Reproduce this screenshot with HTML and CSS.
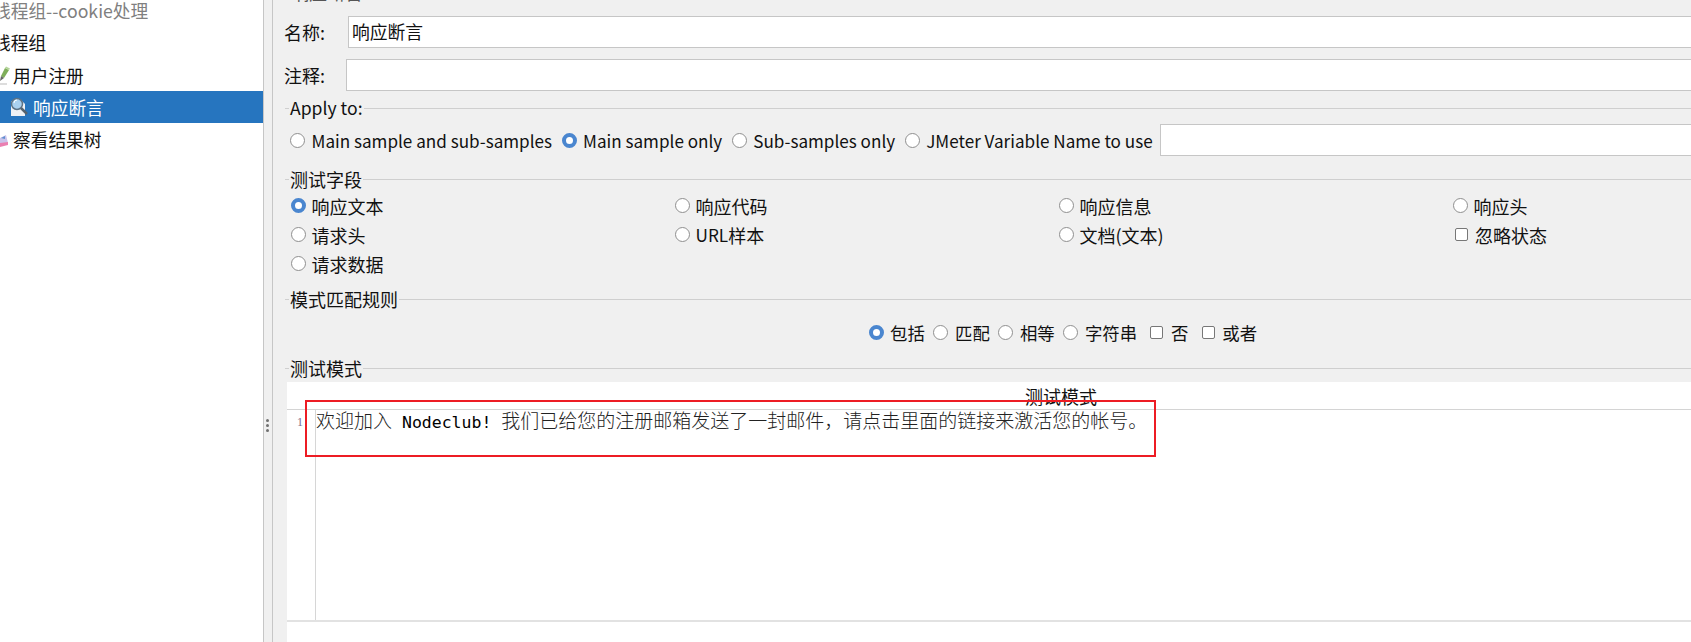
FILE: index.html
```html
<!DOCTYPE html>
<html lang="zh">
<head>
<meta charset="utf-8">
<title>响应断言</title>
<link rel="stylesheet" href="styles.css">
</head>
<body>
<div class="app">
  <nav class="tree">
    <div class="node disabled lead"><span>线程组--cookie处理</span></div>
    <div class="node lead"><span>线程组</span></div>
    <div class="node child">
      <svg class="icon edge" width="10" height="20" viewBox="0 0 10 20"><path d="M0 19h7" stroke="#ddd" stroke-width="2"/><path d="M1 11 5 3l4 2-5 8z" fill="#7fae5a"/><path d="M5 3l1-1.500 4 2-1 1.500z" fill="#b3d498"/><path d="M1 11l-1 5 4-3z" fill="#666"/></svg>
      <span>用户注册</span>
    </div>
    <div class="node selected">
      <svg class="icon" width="18" height="20" viewBox="0 0 18 20"><path d="M1 4h11l3 3v12H1z" fill="#eef1f5"/><circle cx="7" cy="7" r="5.500" fill="#a9d0ef" stroke="#5d7386" stroke-width="1.500"/><path d="M4 6a3 3 0 0 1 3-3" stroke="#fff" fill="none"/><path d="M11 11l6 6" stroke="#56636e" stroke-width="2.500"/></svg>
      <span>响应断言</span>
    </div>
    <div class="node child">
      <svg class="icon edge" width="10" height="18" viewBox="0 0 10 18"><path d="M0 8 6 5l2 8-8 2z" fill="#c9c3ea"/><path d="M0 13l8-1v3l-8 2z" fill="#ea7fb0"/><path d="M1 8l4-2v3z" fill="#5f8fd0"/></svg>
      <span>察看结果树</span>
    </div>
  </nav>
  <div class="splitter"><i></i><i></i><i></i></div>
  <main class="panel">
    <div class="cut-title">响应断言</div>
    <div class="field name"><label>名称:</label><div class="input">响应断言</div></div>
    <div class="field comment"><label>注释:</label><div class="input"></div></div>

    <section class="group apply">
      <h3 class="legend latin"><span>Apply to:</span></h3>
      <div class="apply-row">
        <label class="opt"><input type="radio" name="a">Main sample and sub-samples</label>
        <label class="opt"><input type="radio" name="a" checked>Main sample only</label>
        <label class="opt"><input type="radio" name="a">Sub-samples only</label>
        <label class="opt"><input type="radio" name="a">JMeter Variable Name to use</label>
        <div class="input var"></div>
      </div>
    </section>

    <section class="group fields">
      <h3 class="legend"><span>测试字段</span></h3>
      <div class="field-grid">
        <label class="opt"><input type="radio" name="f" checked>响应文本</label>
        <label class="opt"><input type="radio" name="f">响应代码</label>
        <label class="opt"><input type="radio" name="f">响应信息</label>
        <label class="opt"><input type="radio" name="f">响应头</label>
        <label class="opt"><input type="radio" name="f">请求头</label>
        <label class="opt"><input type="radio" name="f"><span class="abbr">URL</span>样本</label>
        <label class="opt"><input type="radio" name="f">文档(文本)</label>
        <label class="opt"><input type="checkbox">忽略状态</label>
        <label class="opt"><input type="radio" name="f">请求数据</label>
      </div>
    </section>

    <section class="group rules">
      <h3 class="legend"><span>模式匹配规则</span></h3>
      <div class="rule-row">
        <label class="opt"><input type="radio" name="r" checked>包括</label>
        <label class="opt"><input type="radio" name="r">匹配</label>
        <label class="opt"><input type="radio" name="r">相等</label>
        <label class="opt"><input type="radio" name="r">字符串</label>
        <label class="opt"><input type="checkbox">否</label>
        <label class="opt"><input type="checkbox">或者</label>
      </div>
    </section>

    <section class="group pattern">
      <h3 class="legend"><span>测试模式</span></h3>
      <div class="editor">
        <div class="editor-title">测试模式</div>
        <div class="editor-body">
          <div class="gutter">1</div>
          <div class="code">欢迎加入<b> Nodeclub! </b>我们已给您的注册邮箱发送了一封邮件&#xFF0C;请点击里面的链接来激活您的帐号。</div>
        </div>
        <div class="highlight"></div>
      </div>
    </section>
  </main>
</div>
</body>
</html>
```

FILE: styles.css
```css
* { box-sizing: border-box; }
html, body { margin: 0; height: 100%; overflow: hidden; background: #fff; }
body { font-family: "Noto Sans CJK SC", "Noto Sans", sans-serif; font-size: 18px; color: #111; }

.app { display: flex; height: 642px; }

.tree { width: 264px; flex: none; background: #fff; border-right: 1px solid #c6c6c6; overflow: hidden; }
.node { display: flex; align-items: center; height: 32px; padding-bottom: 1px; white-space: nowrap; font-size: 17.700px; }
.node.lead span { margin-left: -7px; }
.node.lead:first-child { height: 26px; padding-bottom: 6px; }
.node.lead:nth-child(2) { height: 33px; }
.node.disabled { color: #808080; }
.node.selected { background: #2675bf; color: #fff; padding-left: 10px; padding-bottom: 0; }
.node.selected .icon { margin-right: 5px; }
.icon { flex: none; }
.edge { margin-right: 3px; }

.splitter { width: 9px; flex: none; background: #f0f0f0; border-right: 1px solid #c6c6c6; display: flex; flex-direction: column; align-items: center; gap: 2px; padding-top: 419px; padding-right: 1px; }
.splitter i { width: 3px; height: 3px; border-radius: 50%; background: #707070; }

.panel { flex: 1; min-width: 0; background: #f0f0f0; overflow: hidden; padding-left: 14px; }
.cut-title { height: 18px; margin-top: -18px; margin-bottom: 16px; padding-left: 4px; line-height: 20px; color: #555; }

.input { background: #fff; border: 1px solid #c6c6c6; border-right: 0; height: 32px; flex: 1; line-height: 28px; padding-left: 3px; min-width: 0; font-size: 17.800px; }
.field { display: flex; align-items: center; height: 32px; margin-left: -3px; }
.field.name label { width: 64px; }
.field.comment label { width: 62px; }
.field.comment { margin-top: 11px; }

.group { margin-left: -2px; }
.legend { margin: 0; font-weight: 400; font-size: 18px; display: flex; align-items: center; height: 20px; line-height: 20px; }
.legend.latin { font-size: 17.600px; }
.legend::before { content: ""; width: 4px; border-top: 1px solid #cfcfcf; margin-right: 1px; flex: none; }
.legend::after { content: ""; flex: 1; border-top: 1px solid #cfcfcf; margin-left: 1px; }

.opt { display: inline-flex; align-items: center; white-space: nowrap; height: 24px; }
.opt input { appearance: none; -webkit-appearance: none; margin: 0 6.500px 0 0; flex: none; background: #fff; border: 1px solid #8f8f8f; }
.opt input[type=radio] { width: 15px; height: 15px; border-radius: 50%; }
.opt input[type=radio]:checked { background: #fff; border: 4.500px solid #4a86cf; }
.opt input[type=checkbox] { width: 13px; height: 13px; border-radius: 2px; border-color: #777; margin-left: 1.500px; margin-right: 7.500px; }
.abbr { font-size: 17.200px; }

.apply { margin-top: 7px; }
.apply-row { display: flex; align-items: center; gap: 9.500px; padding-left: 5px; margin-top: 6px; height: 32px; font-size: 17.100px; }
.input.var { margin-left: -2.500px; }

.fields { margin-top: 13px; }
.field-grid { display: grid; grid-template-columns: 384px 384px 394px 1fr; grid-auto-rows: 29px; padding-left: 6px; align-items: center; margin-top: 2px; }
.field-grid .opt input[type=radio] { margin-right: 5.500px; }

.rules { margin-top: 11px; }
.rule-row { display: flex; align-items: center; gap: 8.700px; padding-left: 583.500px; margin-top: 11px; height: 24px; font-size: 17.400px; }
.rule-row .opt input[type=checkbox] { margin-left: 4.500px; margin-right: 7.700px; }

.pattern { margin-top: 14px; }
.editor { position: relative; margin: 4px 0 0 2px; background: #fff; height: 260px; }
.editor-title { height: 28px; border-bottom: 1px solid #d4d4d4; padding-left: 738px; line-height: 28px; white-space: nowrap; }
.editor-body { display: flex; height: 212px; border-bottom: 2px solid #e2e2e2; }
.gutter { width: 29px; flex: none; border-right: 1px solid #d6d6d6; font-family: "Liberation Serif", serif; font-size: 12px; color: #7a6a8a; text-align: right; padding-right: 12px; line-height: 24px; }
.code { font-size: 19px; line-height: 20px; white-space: pre; color: #222; font-weight: 300; }
.code b { font-family: "DejaVu Sans Mono", monospace; font-size: 16.500px; font-weight: 400; color: #000; }
.highlight { position: absolute; left: 18px; top: 18px; width: 851px; height: 57px; border: 2px solid #ed1c24; pointer-events: none; }
```
